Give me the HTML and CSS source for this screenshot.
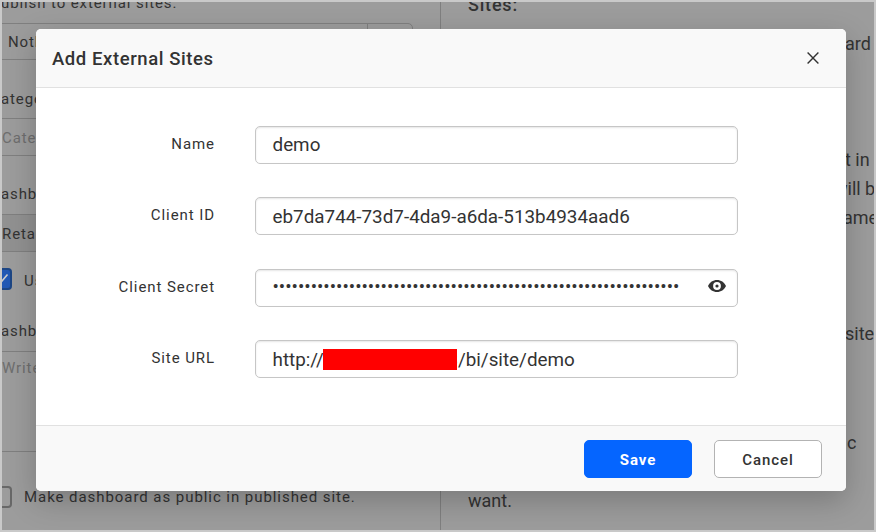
FILE: index.html
```html
<!DOCTYPE html>
<html lang="en">
<head>
<meta charset="utf-8">
<title>Add External Sites</title>
<link rel="stylesheet" href="styles.css">
</head>
<body>
<div class="page">
  <section class="form-pane">
    <p class="intro">ublish to external sites.</p>
    <div class="select"><span>Noth</span><i class="select-toggle"></i></div>
    <p class="label">atego</p>
    <div class="box muted">Cate</div>
    <p class="label second">ashb</p>
    <div class="box filled">Reta</div>
    <div class="check-row use-row">
      <span class="check checked"><svg viewBox="0 0 10 18"><path d="M-4 8.500 L-.8 12 L5.500 4.500"/></svg></span>
      <span>Us</span>
    </div>
    <p class="label third">ashb</p>
    <div class="box area muted">Write</div>
    <div class="check-row public-row">
      <span class="check"></span>
      <span class="public-text">Make dashboard as public in published site.</span>
    </div>
  </section>
  <aside class="help-pane">
    <h2>Sites:</h2>
    <p class="tail first">ard</p>
    <p class="tail gap">t in</p>
    <p class="tail will">will b</p>
    <p class="tail name">ame</p>
    <p class="tail gap">site</p>
    <p class="tail last">c</p>
    <p class="want">want.</p>
  </aside>
</div>
<div class="modal">
  <header class="modal-head">
    <h1>Add External Sites</h1>
    <svg class="close" viewBox="0 0 12 12"><path d="M.6 .6 11.4 11.4M11.4 .6 .6 11.4"/></svg>
  </header>
  <div class="modal-body">
    <div class="field"><span class="field-label">Name</span><div class="input raised">demo</div></div>
    <div class="field"><span class="field-label">Client ID</span><div class="input">eb7da744-73d7-4da9-a6da-513b4934aad6</div></div>
    <div class="field"><span class="field-label">Client Secret</span><div class="input secret"><span class="dots">••••••••••••••••••••••••••••••••••••••••••••••••••••••••••••••••</span>
      <svg class="eye" viewBox="0 0 18 12"><path fill-rule="evenodd" d="M0 6C1.7 2.3 5 0 9 0s7.300 2.300 9 6c-1.700 3.700-5 6-9 6S1.700 9.700 0 6ZM9 2.100a3.900 3.900 0 1 0 0 7.800 3.900 3.900 0 0 0 0-7.800Z"/><circle cx="9" cy="6" r="1.600"/></svg></div></div>
    <div class="field"><span class="field-label">Site URL</span><div class="input"><span>http://</span><span class="redacted"></span><span class="path">8/bi/site/demo</span></div></div>
  </div>
  <footer class="modal-foot">
    <button class="btn save">Save</button>
    <button class="btn cancel">Cancel</button>
  </footer>
</div>
</body>
</html>
```

FILE: styles.css
```css
* { box-sizing: border-box; }
body {
  margin: 0;
  width: 876px;
  height: 532px;
  overflow: hidden;
  position: relative;
  font-family: Roboto, "Liberation Sans", sans-serif;
  color: #333;
}
h1, h2, p { margin: 0; }
.page {
  display: flex;
  width: 876px;
  height: 532px;
  border: 2px solid #c9c9c9;
  background: #9c9c9c;
  overflow: hidden;
}
.form-pane {
  width: 439px;
  height: 528px;
  border-right: 1px solid #7f7f7f;
  font-size: 15px;
  line-height: 20px;
  letter-spacing: .9px;
  white-space: nowrap;
  overflow: hidden;
}
.intro { margin-top: -9px; margin-left: -1px; }
.select {
  display: flex;
  justify-content: space-between;
  width: 421px;
  height: 37px;
  margin: 10px 0 0 -10px;
  padding-left: 15px;
  border: 1px solid #7f7f7f;
  border-radius: 5px;
  line-height: 37px;
}
.select-toggle { width: 45px; border-left: 1px solid #7f7f7f; }
.label { margin-top: 29px; margin-left: -1px; }
.label.second { margin-top: 28px; }
.label.third { margin-top: 31px; }
.box {
  width: 421px;
  height: 38px;
  margin: 9px 0 0 -10px;
  padding-left: 9px;
  border: 1px solid #7f7f7f;
  border-radius: 5px;
  line-height: 38px;
}
.label.second + .box, .label.third + .box { margin-top: 10px; }
.box.filled { background: #919191; }
.box.area { height: 101px; line-height: 32px; }
.muted { color: #6e6e6e; }
.check-row { display: flex; gap: 12px; height: 22px; line-height: 22px; }
.check {
  width: 22px;
  height: 22px;
  margin-left: -12px;
  border: 2px solid #686868;
  border-radius: 4px;
}
.check.checked { background: #2158b4; border-color: #1d4685; padding-left: 10px; }
.check svg { display: block; width: 10px; height: 18px; fill: none; stroke: #ccc; stroke-width: 1.6; overflow: visible; }
.use-row { margin-top: 16px; line-height: 26px; }
.public-row { margin-top: 34px; }
.public-text { letter-spacing: .94px; }
.help-pane {
  flex: 1;
  padding-left: 27px;
  font-size: 18px;
  line-height: 29px;
  white-space: nowrap;
  overflow: hidden;
}
.help-pane h2 { margin-top: -12px; font-size: 18px; font-weight: 500; letter-spacing: .8px; }
.tail { margin-left: 377px; }
.tail.first { margin-top: 10px; }
.tail.gap { margin-top: 87px; }
.tail.will { margin-left: 366px; }
.tail.name { margin-left: 375px; }
.tail.last { margin-top: 80px; margin-left: 379px; }
.want { margin-top: 29px; }

.modal {
  position: absolute;
  left: 36px;
  top: 29px;
  display: flex;
  flex-direction: column;
  width: 810px;
  height: 462px;
  border-radius: 5px;
  background: #fff;
  box-shadow: 0 10px 30px rgba(0, 0, 0, .22);
  overflow: hidden;
}
.modal-head {
  display: flex;
  align-items: center;
  justify-content: space-between;
  height: 59px;
  padding: 0 27px 0 16px;
  border-bottom: 1px solid #e1e1e1;
  background: #f9f9f9;
}
.modal-head h1 { padding-top: 2px; font-size: 18.5px; font-weight: 500; letter-spacing: .58px; }
.close { width: 12px; height: 12px; fill: none; stroke: #333; stroke-width: 1.4; }
.modal-body {
  display: flex;
  flex-direction: column;
  gap: 33.4px;
  flex: 1;
  padding: 38px 0 0;
}
.field { display: flex; gap: 40px; height: 38px; }
.field-label {
  width: 179px;
  text-align: right;
  font-size: 15px;
  line-height: 37px;
  letter-spacing: .92px;
}
.input {
  display: flex;
  align-items: center;
  width: 483px;
  height: 38px;
  padding: 2px 11px 0 16.5px;
  border: 1px solid #c6c6c6;
  border-radius: 5px;
  box-shadow: inset 0 1px 2px rgba(0, 0, 0, .1);
  font-size: 18.85px;
  white-space: nowrap;
}
.input.raised { padding-top: 0; }
.secret { justify-content: space-between; }
.dots { line-height: 20px; margin-top: -4px; }
.eye { width: 18px; height: 12px; margin-top: -5px; fill: #333; }
.redacted {
  position: relative;
  width: 134px;
  height: 21px;
  margin: -2px 0 0 -1px;
  background: #f00;
}
.path { margin-left: -9.5px; }
.modal-foot {
  display: flex;
  justify-content: flex-end;
  gap: 22px;
  height: 66px;
  padding: 14px 24px 0 0;
  border-top: 1px solid #e1e1e1;
  background: #f9f9f9;
}
.btn {
  width: 108px;
  height: 38px;
  padding: 2px 0 0;
  border: 1px solid #b3b3b3;
  border-radius: 5px;
  background: #fff;
  color: #333;
  font: 500 15px Roboto, "Liberation Sans", sans-serif;
  letter-spacing: .92px;
}
.btn.save { border-color: #0565ff; background: #0565ff; color: #fff; font-weight: 700; }
```
